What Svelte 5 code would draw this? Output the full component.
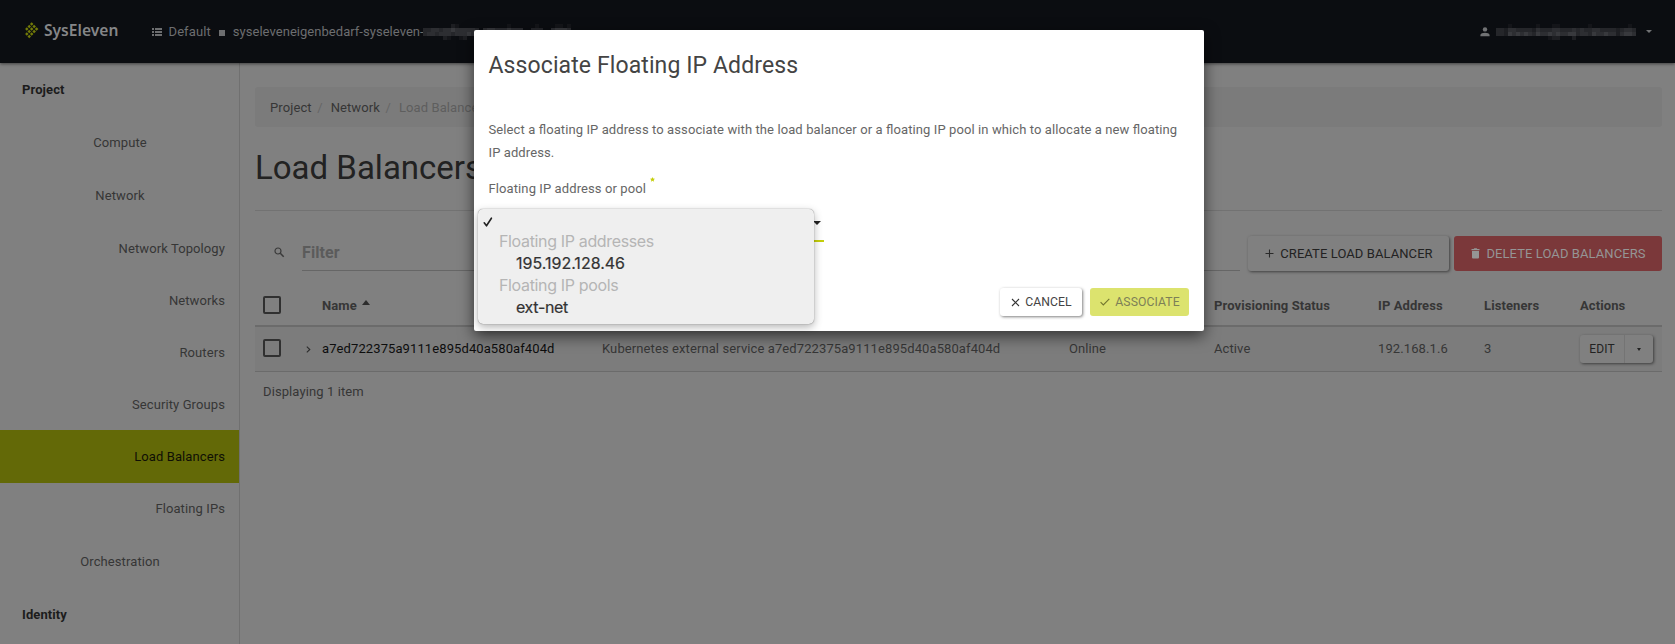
<script>
  const nav = [
    { label: 'Project', kind: 'dashboard' },
    { label: 'Compute', kind: 'group' },
    { label: 'Network', kind: 'group' },
    { label: 'Network Topology', kind: 'leaf' },
    { label: 'Networks', kind: 'leaf' },
    { label: 'Routers', kind: 'leaf' },
    { label: 'Security Groups', kind: 'leaf' },
    { label: 'Load Balancers', kind: 'leaf', active: true },
    { label: 'Floating IPs', kind: 'leaf' },
    { label: 'Orchestration', kind: 'group' },
    { label: 'Identity', kind: 'dashboard' }
  ];

  // Brightness of each 4px cell in the masked names, top row first.
  const userMask = [
    '00010000001000110000000100000000010',
    '33244333324333443334343344333323443',
    '33254545435445454455344354454424554',
    '00000000000001220002000000000000000'
  ];
  const projectMask = [
    '00000002100000000000010000001000011010',
    '33443445444443045544454440033300455540',
    '34434443444540000000000000000000000000',
    '00000210012000000000000000000000000000'
  ];
  const shades = ['transparent', '#141519', '#1d1e22', '#25262a', '#2d2e32', '#38393d'];

  // Logo dots: column and row on a diagonal lattice.
  const dots = [
    [2, 0], [1, 1], [3, 1], [0, 2], [2, 2], [4, 2], [1, 3], [3, 3], [0, 4], [2, 4], [1, 5]
  ];
</script>

{#snippet mosaic(rows)}
  <svg class="mosaic" width={rows[0].length * 4} height={rows.length * 4} shape-rendering="crispEdges">
    {#each rows as row, y}
      {#each row.split('') as cell, x}
        <rect x={x * 4} y={y * 4} width="4" height="4" fill={shades[+cell]} />
      {/each}
    {/each}
  </svg>
{/snippet}

<div class="page">
  <header>
    <div class="brand">
      <svg width="14" height="17" viewBox="0 0 14 17">
        {#each dots as [c, r]}
          <rect x="-1.25" y="-1.25" width="2.5" height="2.5" transform="translate({1.8 + c * 2.45} {2 + r * 2.5}) rotate(45)" fill="#727a08" />
        {/each}
      </svg>
      <span>SysEleven</span>
    </div>
    <div class="context">
      <svg width="10" height="8" viewBox="0 0 10 8" fill="#6d6e70">
        <path d="M0 0h2v2H0zM3 0h7v2H3zM0 3h2v2H0zM3 3h7v2H3zM0 6h2v2H0zM3 6h7v2H3z" />
      </svg>
      <span class="domain">Default</span>
      <i class="square"></i>
      <span class="tenant">syseleveneigenbedarf-syseleven-</span>
      {@render mosaic(projectMask)}
    </div>
    <div class="user">
      <svg width="10" height="10" viewBox="0 0 10 10" fill="#717274">
        <circle cx="5" cy="2.4" r="2.2" /><path d="M0.4 9.3V8C.4 6.4 3 5.7 5 5.7S9.6 6.4 9.6 8v1.3z" />
      </svg>
      {@render mosaic(userMask)}
      <i class="caret"></i>
    </div>
  </header>

  <div class="body">
    <nav>
      {#each nav as item}
        <div class="item {item.kind}" class:active={item.active}>{item.label}</div>
      {/each}
    </nav>

    <main>
      <div class="crumbs"><span>Project</span><b>/</b><span>Network</span><b>/</b><em>Load Balance</em></div>
      <h1>Load Balancers</h1>
      <div class="tools">
        <svg class="search" width="11" height="11" viewBox="0 0 11 11" fill="none" stroke="#3a3a3a" stroke-width="1.2">
          <circle cx="4" cy="4" r="3" /><path d="M6.3 6.3l3.4 3.5" stroke-width="1.5" />
        </svg>
        <div class="filter">Filter</div>
        <div class="btn create">
          <svg width="9" height="9" viewBox="0 0 9 9" stroke="#2a2a2a" stroke-width="1.1"><path d="M4.5 .5v8M.5 4.5h8" /></svg>
          <span>Create Load Balancer</span>
        </div>
        <div class="btn delete">
          <svg width="9" height="11" viewBox="0 0 9 11" fill="#959595"><path d="M1 3h7v6.5a1 1 0 0 1-1 1H2a1 1 0 0 1-1-1zM.5 1h2.2L3.3.3h2.4l.6.7h2.2v1.2h-8z" /></svg>
          <span>Delete Load Balancers</span>
        </div>
      </div>

      <div class="row head">
        <i class="check"></i>
        <span></span>
        <span class="sort">Name<i></i></span>
        <span></span>
        <span></span>
        <span>Provisioning Status</span>
        <span>IP Address</span>
        <span>Listeners</span>
        <span>Actions</span>
      </div>
      <div class="row item-row">
        <i class="check"></i>
        <svg width="5" height="7" viewBox="0 0 5 7" fill="none" stroke="#2c2c2c" stroke-width="1.1"><path d="M.8 .6l3 2.9-3 2.9" /></svg>
        <a href="#lb">a7ed722375a9111e895d40a580af404d</a>
        <span>Kubernetes external service a7ed722375a9111e895d40a580af404d</span>
        <span>Online</span>
        <span>Active</span>
        <span>192.168.1.6</span>
        <span>3</span>
        <div class="split"><span>Edit</span><div><i></i></div></div>
      </div>
      <div class="count">Displaying 1 item</div>
    </main>
  </div>

  <div class="modal">
    <h2>Associate Floating IP Address</h2>
    <p>Select a floating IP address to associate with the load balancer or a floating IP pool in which to allocate a new floating IP address.</p>
    <div class="label">Floating IP address or pool<sup>
      <svg width="5" height="5" viewBox="0 0 5 5" fill="#c5cf0b"><path d="M2.5 0l.7 1.6 1.8.2-1.3 1.1.4 1.9-1.6-1-1.6 1 .4-1.9L0 1.800l1.800-.2z" /></svg>
    </sup></div>
    <div class="select">
      <i></i>
      <div class="options">
        <svg width="10" height="10" viewBox="0 0 10 10" fill="none" stroke="#222" stroke-width="1.6" stroke-linecap="round" stroke-linejoin="round"><path d="M1.2 5.800l2.300 3L8.400 1.200" /></svg>
        <div class="group-label">Floating IP addresses</div>
        <div class="option address">195.192.128.46</div>
        <div class="group-label">Floating IP pools</div>
        <div class="option">ext-net</div>
      </div>
    </div>
    <footer>
      <div class="act cancel">
        <svg width="9" height="9" viewBox="0 0 9 9" stroke="#333" stroke-width="1.1"><path d="M1 1l7 7M8 1L1 8" /></svg><span>Cancel</span>
      </div>
      <div class="act associate">
        <svg width="10" height="8" viewBox="0 0 10 8" fill="none" stroke="#72762f" stroke-width="1.1"><path d="M.6 4.200l2.700 2.700L9.300 .8" /></svg><span>Associate</span>
      </div>
    </footer>
  </div>
</div>

<style>
  :global(body) { margin: 0; background: #808080; }
  .page, .page * { box-sizing: border-box; }
  .page {
    position: relative; width: 1675px; height: 644px; overflow: hidden;
    background: #808080; color: #363636; font: 13px/24px Roboto, sans-serif; letter-spacing: 0.1px;
    font-feature-settings: "liga" 1;
    display: flex; flex-direction: column;
  }
  svg { display: block; flex: none; }
  header {
    height: 63px; flex: none; background: #0b0d11; color: #6d6e70;
    display: flex; align-items: center; position: relative;
    box-shadow: 0 1px 3px rgba(0, 0, 0, 0.5);
  }
  .brand { display: flex; align-items: center; margin-left: 25px; width: 127px; gap: 5px; padding-bottom: 2px; }
  .brand span { font: 600 15.6px/20px "Noto Sans", sans-serif; color: #858688; letter-spacing: 0; padding-bottom: 2px; }
  .context { display: flex; align-items: center; flex: 1; }
  .domain { margin-left: 6.5px; }
  .square { width: 6px; height: 6px; background: #6d6e70; margin: 2px 8px 0 8px; }
  .tenant { letter-spacing: 0.04px; }
  .user { display: flex; align-items: center; margin-right: 23px; }
  .user .mosaic { margin: 1px 10px 0 6px; }
  .context .mosaic { margin: 1px 0 0 -1px; }
  .caret { border: 3px solid transparent; border-top-color: #717274; border-bottom: 0; }

  .body { display: flex; flex: 1; min-height: 0; }
  nav { width: 240px; flex: none; border-right: 1px solid #707070; }
  .item { height: 53px; line-height: 53px; }
  .dashboard { padding-left: 22px; font-weight: 700; color: #1c1c1c; }
  .group { text-align: center; padding-left: 1px; }
  .leaf { text-align: right; padding-right: 14px; }
  .leaf + .leaf { margin-top: -1px; }
  .item.active { background: #636907; color: #0f0f05; position: relative; }

  main { flex: 1; padding: 24px 13px 0 15px; }
  .crumbs { height: 40px; line-height: 41px; background: #7b7b7b; border-radius: 3px; padding-left: 15px; display: flex; }
  .crumbs b { font-weight: 400; color: #666; padding: 0 8px 0 5.5px; }
  .crumbs em { font-style: normal; color: #5e5e5e; }
  h1 { margin: 0; height: 84px; border-bottom: 1px solid #727272; font: 400 33px/82px Roboto, sans-serif; letter-spacing: 0; color: #222; }
  .tools { display: flex; margin-top: 25px; height: 35px; }
  .search { margin: 11px 17px 0 19px; }
  .filter { flex: 1; border-bottom: 1px solid #666; font: 700 16px/33px Roboto, sans-serif; letter-spacing: 0.1px; color: #5b5b5b; }
  .btn { display: flex; align-items: center; justify-content: center; gap: 6px; padding-left: 1px; border-radius: 3px; text-transform: uppercase; letter-spacing: 0.08px; }
  .create { width: 201px; margin: 0 5px 0 8px; color: #222; box-shadow: 1px 1px 3px rgba(0, 0, 0, 0.5); }
  .delete { width: 208px; background: #7b383a; color: #959595; }

  .row { display: grid; grid-template-columns: 43px 16px 280px 467px 145px 164px 106px 96px 1fr; align-items: center; padding-left: 8px; }
  .head { height: 56px; padding-top: 16px; border-bottom: 2px solid #6b6b6b; font-weight: 700; }
  .head .check { position: relative; top: -1px; }
  .check { width: 18px; height: 18px; border: 2px solid #303030; border-radius: 2px; }
  .item-row { height: 45px; border-bottom: 1px solid #6b6b6b; background: #7c7c7c; }
  .item-row a { color: #0d0d0d; text-decoration: none; }
  .item-row .check { position: relative; top: -1px; }
  .sort { display: flex; }
  .sort i { border: 4px solid transparent; border-bottom: 5px solid #2c2c2c; border-top: 0; height: 5px; margin: 6px 0 0 5px; }
  .split { display: flex; width: 73px; height: 28px; border-radius: 3px; background: #808080; color: #222; box-shadow: 1px 1px 3px rgba(0, 0, 0, 0.5); text-transform: uppercase; font-size: 12px; line-height: 28px; }
  .split span { width: 45px; text-align: center; border-right: 1px solid #747474; }
  .split div { flex: 1; display: grid; place-items: center; }
  .split i { border: 2.5px solid transparent; border-top: 3px solid #222; border-bottom: 0; }
  .count { padding: 8px 0 0 8px; }

  .modal {
    position: absolute; left: 474px; top: 30px; width: 730px; height: 301px; border-radius: 2px;
    background: #fff; color: #666; padding: 0 15px 0 14.5px; box-shadow: 0 5px 15px rgba(0, 0, 0, 0.6);
  }
  h2 { margin: 0; font: 400 23px/72px Roboto, sans-serif; height: 70px; color: #444; letter-spacing: 0.1px; }
  p { margin: 18px 0 0; line-height: 23px; }
  .label { line-height: 24px; margin-top: 13px; display: flex; }
  sup { margin: 0 0 0 4px; line-height: 0; }
  .select { position: relative; height: 30px; width: 335px; margin-top: 11px; border-bottom: 2px solid #c5cf0b; }
  .select > i { position: absolute; right: 3px; top: 9px; border: 4px solid transparent; border-top-color: #222; border-bottom: 0; }
  .options {
    position: absolute; left: -10.5px; top: -3px; width: 336px; height: 115px; border-radius: 5px;
    background: #efefef; box-shadow: 0 0 1px rgba(0, 0, 0, 0.6), 0 3px 8px rgba(0, 0, 0, 0.3);
    font: 16px/22px Inter, sans-serif; letter-spacing: -0.35px;
  }
  .options svg { margin: 8px 0 3px 5px; }
  .group-label { padding-left: 21px; color: #b5b5b5; }
  .option { padding-left: 38px; color: #333; -webkit-text-stroke: 0.2px #333; }
  .address { letter-spacing: 0; }
  footer { display: flex; justify-content: flex-end; gap: 8px; margin-top: 46px; }
  .act { height: 28px; display: flex; align-items: center; justify-content: center; gap: 5px; padding-left: 1px; border-radius: 3px; text-transform: uppercase; font-size: 12.2px; }
  .cancel { width: 82px; color: #444; box-shadow: 1px 1px 3px rgba(0, 0, 0, 0.5); }
  .associate { width: 99px; background: #dce36e; color: #7d8057; }
</style>
